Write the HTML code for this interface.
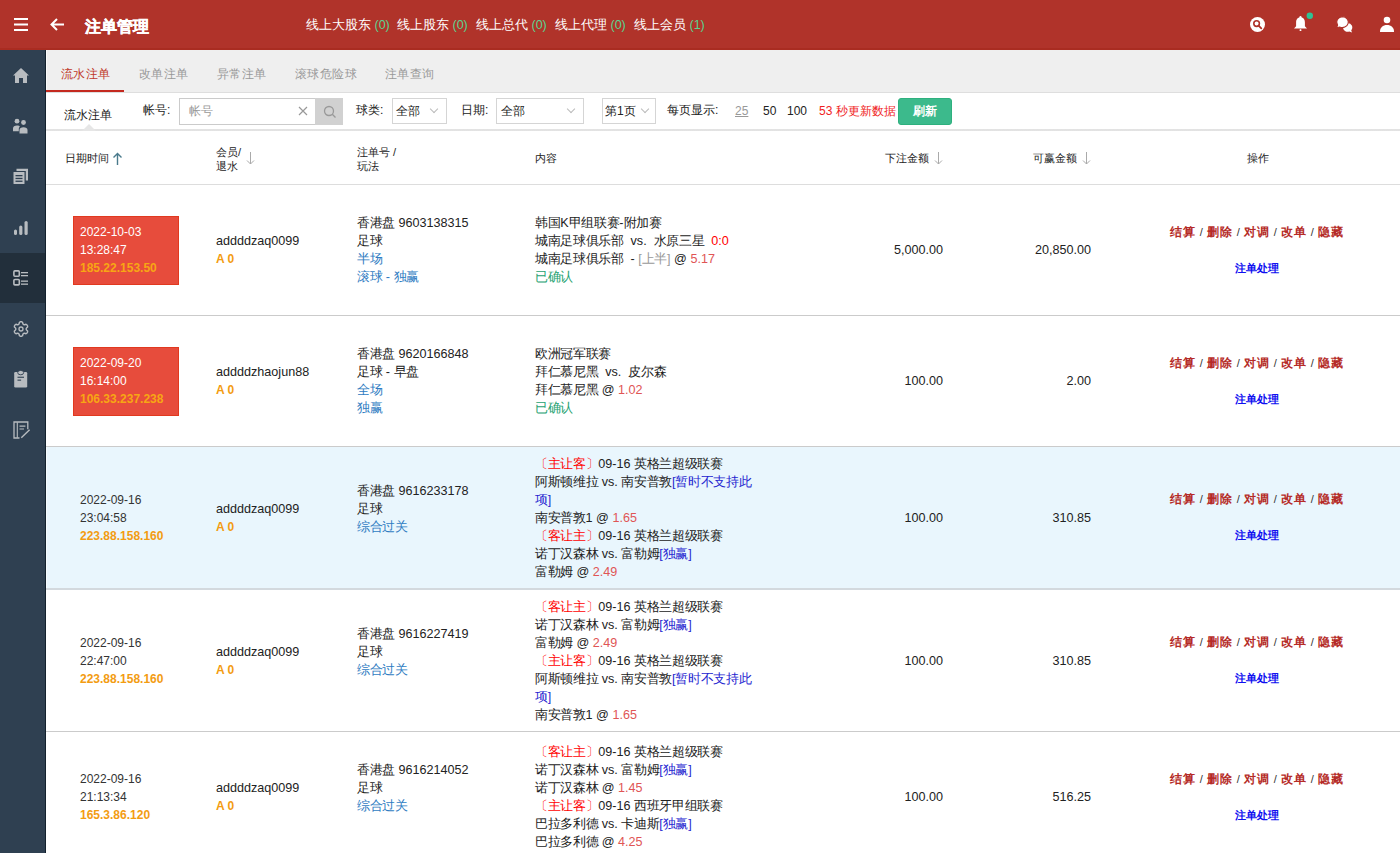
<!DOCTYPE html>
<html><head><meta charset="utf-8">
<style>
*{margin:0;padding:0;box-sizing:border-box}
html,body{width:1400px;height:853px;overflow:hidden;background:#fff;font-family:"Liberation Sans",sans-serif;color:#222;font-size:13px}
.abs{position:absolute}
.nav{position:absolute;top:16px;font-size:12.5px;color:#fff;line-height:18px;white-space:nowrap}
#hdr{position:absolute;left:0;top:0;width:1400px;height:50px;background:#b0332a;border-bottom:2px solid #a92c21}
#side{position:absolute;left:0;top:50px;width:46px;height:803px;background:#2f4051;border-right:1px solid #13212d}
#side .act{position:absolute;left:0;top:203px;width:45px;height:50px;background:#222f3b}
#side svg{position:absolute}
#tabs{position:absolute;left:46px;top:50px;width:1354px;height:43px;background:#efefef;border-bottom:1px solid #dedede}
#tabs span{position:absolute;top:15px;font-size:12px;letter-spacing:.4px;color:#999;line-height:18px;white-space:nowrap}
#tabs .on{color:#c0392b}
#tabs .ul{position:absolute;left:0;top:40px;width:78px;height:2px;background:#c4291f}
#filt{position:absolute;left:46px;top:93px;width:1354px;height:37px;background:#fff}
#shadow{position:absolute;left:46px;top:129px;width:1354px;height:4px;background:linear-gradient(#e6e6e6 0%,#dedede 30%,#efefef 60%,#f8f8f8 100%)}
.ft{position:absolute;font-size:12px;line-height:18px;color:#222;white-space:nowrap}
.bx{position:absolute;border:1px solid #d5d5d5;height:26px;top:98px;background:#fff}
.chev{position:absolute;top:9px;width:6px;height:6px;border-right:1px solid #bbb;border-bottom:1px solid #bbb;transform:rotate(45deg)}
.th{position:absolute;font-size:11px;line-height:14px;color:#222;white-space:nowrap}
.row{position:absolute;left:46px;width:1354px;border-bottom:1px solid #cbcbcb}
.row.blue{background:#e9f6fd;border-bottom:2px solid #d3d9de}
.cell{position:absolute;top:0;bottom:0;display:flex;align-items:center}
.cell>div{line-height:18px;white-space:nowrap;font-size:12.6px}
.cell>.rb{background:#e74c3c;border:1px solid #e1391f;color:#fff;width:106px;padding:6px 6px 7px 6px;font-size:12px}
.rb .ip{color:#f7a614}
.cell>.dtb{padding:7px;font-size:12px;color:#333}
.ip{color:#f39c12;font-weight:bold;font-size:12px}
.ao{color:#f39c12;font-weight:bold;font-size:12px}
.bl{color:#2f7cc2}
.gr{color:#26a271}
.od{color:#e05555}
.rd{color:#f00}
.gy{color:#999}
.pu{color:#2626d0}
.act1{color:#b52b27;font-weight:bold;font-size:12px;letter-spacing:.7px;white-space:nowrap;margin-top:-1px}
.act1 i{font-style:normal;font-weight:normal;color:#333;font-size:11px;padding:0 4.5px 0 4px;letter-spacing:0}
.act2{color:#1010f0;font-weight:bold;font-size:11px;text-align:center;margin-top:18px}
.num{justify-content:flex-end}
.z{letter-spacing:-.35px}
</style></head><body>
<div id="hdr">
  <svg class="abs" style="left:13px;top:17px" width="16" height="15" viewBox="0 0 16 15"><rect x="1" y="1" width="14" height="2" fill="#fff"/><rect x="1" y="6.5" width="14" height="2" fill="#fff"/><rect x="1" y="12" width="14" height="2" fill="#fff"/></svg>
  <svg class="abs" style="left:49px;top:17px" width="16" height="15" viewBox="0 0 16 15"><path d="M15 7.5H2.5M8 2L2.5 7.5L8 13" stroke="#fff" stroke-width="2" fill="none"/></svg>
  <div class="abs" style="left:85px;top:17px;font-size:16px;font-weight:bold;color:#fff;line-height:20px;-webkit-text-stroke:.4px #fff">注单管理</div>
  <div class="nav" style="left:306px">线上大股东 <b style="color:#5ad491;font-weight:normal">(0)</b></div><div class="nav" style="left:397px">线上股东 <b style="color:#5ad491;font-weight:normal">(0)</b></div><div class="nav" style="left:476px">线上总代 <b style="color:#5ad491;font-weight:normal">(0)</b></div><div class="nav" style="left:555px">线上代理 <b style="color:#5ad491;font-weight:normal">(0)</b></div><div class="nav" style="left:634px">线上会员 <b style="color:#5ad491;font-weight:normal">(1)</b></div>
  <!-- search circle -->
  <svg class="abs" style="left:1249px;top:16px" width="17" height="17" viewBox="0 0 17 17"><circle cx="8.5" cy="8.5" r="7.5" fill="#fff"/><circle cx="7.6" cy="7.6" r="2.8" fill="none" stroke="#af3229" stroke-width="1.6"/><path d="M9.6 9.6L12.3 12.3" stroke="#af3229" stroke-width="1.8" stroke-linecap="round"/></svg>
  <!-- bell -->
  <svg class="abs" style="left:1292px;top:11px" width="24" height="22" viewBox="0 0 24 22"><path d="M8.5 6.3C11.2 6.3 12.9 8.5 12.9 11.5V15.3L15 17.6H2L4.1 15.3V11.5C4.1 8.5 5.8 6.3 8.5 6.3Z" fill="#fff"/><circle cx="8.5" cy="6.2" r="1.1" fill="#fff"/><rect x="7.6" y="18.2" width="1.8" height="1.8" rx=".5" fill="#fff"/><circle cx="17.8" cy="4.8" r="3.2" fill="#2fc294"/></svg>
  <!-- chat -->
  <svg class="abs" style="left:1335px;top:16px" width="19" height="17" viewBox="0 0 19 17"><path d="M12.8 7A4.6 4.4 0 0 1 16.2 14.2L17 16.5L14.3 15.5A4.6 4.4 0 1 1 12.8 7Z" fill="#fff"/><path d="M7.5 0.6A6 5.5 0 1 1 4.6 11L1.6 11.8L2.6 9A6 5.5 0 0 1 7.5 0.6Z" fill="#fff" stroke="#af3229" stroke-width="1.1"/></svg>
  <!-- user -->
  <svg class="abs" style="left:1379px;top:16px" width="16" height="17" viewBox="0 0 16 17"><circle cx="8" cy="4" r="3.3" fill="#fff"/><path d="M1 15.5C1 11.5 4 9 8 9S15 11.5 15 15.5V16H1Z" fill="#fff"/></svg>
</div>
<div id="side">
  <div class="act"></div>
  <!-- home -->
  <svg style="left:12px;top:17px" width="18" height="17" viewBox="0 0 18 17"><path d="M9 1L17 8.5H15V16H11V11H7V16H3V8.5H1Z" fill="#b8bcc0"/></svg>
  <!-- users -->
  <svg style="left:12px;top:68px" width="18" height="16" viewBox="0 0 18 16"><circle cx="5" cy="3.2" r="2.4" fill="#b8bcc0"/><circle cx="11.5" cy="4.5" r="2.4" fill="#b8bcc0"/><path d="M1 13.3V10.5C1 8.5 2.5 7.5 5 7.5C6.5 7.5 7.5 8 8 8.6C7 9.3 6.8 10.5 6.8 12V13.3Z" fill="#b8bcc0"/><path d="M7.5 15.5V12C7.5 10 9.2 9.2 11.5 9.2S15.5 10 15.5 12V15.5Z" fill="#b8bcc0"/></svg>
  <!-- docs -->
  <svg style="left:12px;top:118px" width="18" height="17" viewBox="0 0 18 17"><path d="M4.5 0.8H16V12.5H13.8V3H4.5Z" fill="#b8bcc0"/><rect x="1.5" y="4" width="11" height="12" rx="0.5" fill="#b8bcc0"/><rect x="3.5" y="7" width="7" height="1.3" fill="#2f4051"/><rect x="3.5" y="9.8" width="7" height="1.3" fill="#2f4051"/><rect x="3.5" y="12.6" width="7" height="1.3" fill="#2f4051"/></svg>
  <!-- bars -->
  <svg style="left:12px;top:170px" width="18" height="16" viewBox="0 0 18 16"><rect x="2" y="9.5" width="3" height="5.5" rx="1.5" fill="#b8bcc0"/><rect x="7.2" y="5.5" width="3.2" height="9.5" rx="1.6" fill="#b8bcc0"/><rect x="12.5" y="1" width="3.2" height="14" rx="1.6" fill="#b8bcc0"/></svg>
  <!-- list -->
  <svg style="left:12px;top:219px" width="18" height="18" viewBox="0 0 18 18"><rect x="1.9" y="1.9" width="5.4" height="5.4" rx="1" fill="none" stroke="#b8bcc0" stroke-width="1.6"/><rect x="1.9" y="10.5" width="5.4" height="5.4" rx="1" fill="none" stroke="#b8bcc0" stroke-width="1.6"/><rect x="9" y="3" width="7" height="1.3" fill="#b8bcc0"/><rect x="9" y="6" width="7" height="1.3" fill="#b8bcc0"/><rect x="9" y="11.5" width="7" height="1.3" fill="#b8bcc0"/><rect x="9" y="14.5" width="7" height="1.3" fill="#b8bcc0"/></svg>
  <!-- gear -->
  <svg style="left:12px;top:270px" width="18" height="18" viewBox="0 0 18 18"><path d="M7.08 3.74 L7.45 2.28 L8.24 1.79 L9.76 1.79 L10.55 2.28 L10.92 3.74 L11.55 4.58 L12.60 4.71 L14.05 4.29 L14.87 4.74 L15.62 6.05 L15.60 6.98 L14.51 8.03 L14.10 9.00 L14.51 9.97 L15.60 11.02 L15.62 11.95 L14.87 13.26 L14.05 13.71 L12.60 13.29 L11.55 13.42 L10.92 14.26 L10.55 15.72 L9.76 16.21 L8.24 16.21 L7.45 15.72 L7.08 14.26 L6.45 13.42 L5.40 13.29 L3.95 13.71 L3.13 13.26 L2.38 11.95 L2.40 11.02 L3.49 9.97 L3.90 9.00 L3.49 8.03 L2.40 6.98 L2.38 6.05 L3.13 4.74 L3.95 4.29 L5.40 4.71 L6.45 4.58Z" fill="none" stroke="#b8bcc0" stroke-width="1.4" stroke-linejoin="round"/><circle cx="9" cy="9" r="2" fill="none" stroke="#b8bcc0" stroke-width="1.3"/></svg>
  <!-- clipboard -->
  <svg style="left:12px;top:320px" width="18" height="18" viewBox="0 0 18 18"><rect x="2.2" y="2" width="13" height="15.5" rx="1.3" fill="#b8bcc0"/><ellipse cx="8.7" cy="2.6" rx="3" ry="2.2" fill="#b8bcc0" stroke="#2f4051" stroke-width="0.9"/><rect x="5.5" y="6.7" width="6.5" height="1.1" fill="#2f4051"/><rect x="5.5" y="9.6" width="3.6" height="1.1" fill="#2f4051"/></svg>
  <!-- form edit -->
  <svg style="left:12px;top:371px" width="19" height="18" viewBox="0 0 19 18"><path d="M7.5 17H2V1H15.8V8.2" fill="none" stroke="#b8bcc0" stroke-width="1.3"/><path d="M5.3 1.3V16.8" stroke="#b8bcc0" stroke-width="1.1"/><path d="M7.5 5.2H13.4M7.5 8H12" stroke="#b8bcc0" stroke-width="1.2"/><path d="M9.3 16.8L17.6 8.8" stroke="#b8bcc0" stroke-width="1.4"/></svg>
</div>
<div id="tabs">
  <span class="on" style="left:15px">流水注单</span>
  <span style="left:93px">改单注单</span>
  <span style="left:171px">异常注单</span>
  <span style="left:249px">滚球危险球</span>
  <span style="left:339px">注单查询</span>
  <div class="ul"></div>
</div>
<div id="filt"></div>
<div id="shadow"></div>
<svg class="abs" style="left:82px;top:124px" width="14" height="7" viewBox="0 0 14 7"><path d="M0 7L7 0L14 7Z" fill="#e6e6e6"/></svg>
<div class="ft" style="left:64px;top:106px;font-size:12px">流水注单</div>
<div class="ft" style="left:143px;top:101px">帐号:</div>
<div class="bx" style="left:179px;width:137px;height:27px;border-color:#cbcbcb"><span class="ft" style="left:9px;top:3px;color:#999">帐号</span><svg class="abs" style="left:118px;top:7px" width="10" height="10" viewBox="0 0 10 10"><path d="M1 1L9 9M9 1L1 9" stroke="#999" stroke-width="1.2"/></svg></div>
<div class="abs" style="left:315px;top:98px;width:28px;height:27px;background:#d1d1d1"><svg class="abs" style="left:8px;top:7px" width="14" height="14" viewBox="0 0 14 14"><circle cx="6" cy="6" r="4.5" fill="none" stroke="#999" stroke-width="1.3"/><path d="M9.3 9.3L12.5 12.5" stroke="#999" stroke-width="1.3"/></svg></div>
<div class="ft" style="left:356px;top:101px">球类:</div>
<div class="bx" style="left:392px;width:55px"><span class="ft" style="left:3px;top:3px">全部</span><div class="chev" style="left:38px;top:7px"></div></div>
<div class="ft" style="left:461px;top:101px">日期:</div>
<div class="bx" style="left:496px;width:88px"><span class="ft" style="left:4px;top:3px">全部</span><div class="chev" style="left:71px;top:7px"></div></div>
<div class="bx" style="left:602px;width:54px"><span class="ft" style="left:2px;top:3px">第1页</span><div class="chev" style="left:39px;top:7px"></div></div>
<div class="ft" style="left:667px;top:101px">每页显示:</div>
<div class="ft" style="left:735px;top:102px;color:#999;text-decoration:underline">25</div>
<div class="ft" style="left:763px;top:102px">50</div>
<div class="ft" style="left:787px;top:102px">100</div>
<div class="ft" style="left:819px;top:102px;color:#f01e1e">53 秒更新数据</div>
<div class="abs" style="left:898px;top:98px;width:54px;height:27px;background:#3cba8c;border:1px solid #2eb07e;border-radius:3px;color:#fff;font-weight:bold;font-size:12px;line-height:25px;text-align:center">刷新</div>

<!-- table header -->
<div class="abs" style="left:46px;top:131px;width:1354px;height:54px;border-bottom:1px solid #ddd;background:#fff"></div>
<div class="th" style="left:65px;top:151px">日期时间</div>
<svg class="abs" style="left:112px;top:152px" width="11" height="13" viewBox="0 0 11 13"><path d="M5.5 1.5V13M1.5 5.5L5.5 1.5L9.5 5.5" stroke="#4a7a8c" stroke-width="1.4" fill="none"/></svg>
<div class="th" style="left:216px;top:145px">会员/<br>退水</div>
<svg class="abs" style="left:246px;top:152px" width="9" height="13" viewBox="0 0 9 13"><path d="M4.5 0V12M1 8.5L4.5 12L8 8.5" stroke="#aaa" stroke-width="1" fill="none"/></svg>
<div class="th" style="left:357px;top:145px">注单号 /<br>玩法</div>
<div class="th" style="left:535px;top:151px">内容</div>
<div class="th" style="left:885px;top:151px">下注金额</div>
<svg class="abs" style="left:934px;top:152px" width="9" height="13" viewBox="0 0 9 13"><path d="M4.5 0V12M1 8.5L4.5 12L8 8.5" stroke="#aaa" stroke-width="1" fill="none"/></svg>
<div class="th" style="left:1033px;top:151px">可赢金额</div>
<svg class="abs" style="left:1082px;top:152px" width="9" height="13" viewBox="0 0 9 13"><path d="M4.5 0V12M1 8.5L4.5 12L8 8.5" stroke="#aaa" stroke-width="1" fill="none"/></svg>
<div class="th" style="left:1247px;top:151px">操作</div>

<div class="row" style="top:185px;height:131px">
<div class="cell" style="left:27px"><div class="rb"><div>2022-10-03</div><div>13:28:47</div><div class="ip">185.22.153.50</div></div></div>
<div class="cell" style="left:170px"><div><div>addddzaq0099</div><div class="ao">A 0</div></div></div>
<div class="cell" style="left:311px"><div><div><span class="z">香港盘</span> 9603138315</div><div><span class="z">足球</span></div><div><span class="bl"><span class="z">半场</span></span></div><div><span class="bl"><span class="z">滚球</span> - <span class="z">独赢</span></span></div></div></div>
<div class="cell" style="left:489px;width:232px"><div><div><span class="z">韩国</span>K<span class="z">甲组联赛</span>-<span class="z">附加赛</span></div><div><span class="z">城南足球俱乐部</span>&nbsp; vs.&nbsp; <span class="z">水原三星</span>&nbsp; <span class="rd">0:0</span></div><div><span class="z">城南足球俱乐部</span>&nbsp; - <span class="gy">[<span class="z">上半</span>]</span> @ <span class="od">5.17</span></div><div><span class="gr"><span class="z">已确认</span></span></div></div></div>
<div class="cell num" style="right:457px"><div>5,000.00</div></div>
<div class="cell num" style="right:309px"><div>20,850.00</div></div>
<div class="cell" style="left:1111px;width:200px;justify-content:center"><div><div class="act1">结算<i>/</i>删除<i>/</i>对调<i>/</i>改单<i>/</i>隐藏</div><div class="act2">注单处理</div></div></div>
</div>
<div class="row" style="top:316px;height:131px">
<div class="cell" style="left:27px"><div class="rb"><div>2022-09-20</div><div>16:14:00</div><div class="ip">106.33.237.238</div></div></div>
<div class="cell" style="left:170px"><div><div>addddzhaojun88</div><div class="ao">A 0</div></div></div>
<div class="cell" style="left:311px"><div><div><span class="z">香港盘</span> 9620166848</div><div><span class="z">足球</span> - <span class="z">早盘</span></div><div><span class="bl"><span class="z">全场</span></span></div><div><span class="bl"><span class="z">独赢</span></span></div></div></div>
<div class="cell" style="left:489px;width:232px"><div><div><span class="z">欧洲冠军联赛</span></div><div><span class="z">拜仁慕尼黑</span>&nbsp; vs.&nbsp; <span class="z">皮尔森</span></div><div><span class="z">拜仁慕尼黑</span> @ <span class="od">1.02</span></div><div><span class="gr"><span class="z">已确认</span></span></div></div></div>
<div class="cell num" style="right:457px"><div>100.00</div></div>
<div class="cell num" style="right:309px"><div>2.00</div></div>
<div class="cell" style="left:1111px;width:200px;justify-content:center"><div><div class="act1">结算<i>/</i>删除<i>/</i>对调<i>/</i>改单<i>/</i>隐藏</div><div class="act2">注单处理</div></div></div>
</div>
<div class="row blue" style="top:447px;height:143px">
<div class="cell" style="left:27px"><div class="dtb"><div>2022-09-16</div><div>23:04:58</div><div class="ip">223.88.158.160</div></div></div>
<div class="cell" style="left:170px"><div><div>addddzaq0099</div><div class="ao">A 0</div></div></div>
<div class="cell" style="left:311px"><div><div><span class="z">香港盘</span> 9616233178</div><div><span class="z">足球</span></div><div><span class="bl"><span class="z">综合过关</span></span></div><div>&nbsp;</div></div></div>
<div class="cell" style="left:489px;width:232px"><div><div><span class="rd"><span class="z">〔主让客〕</span></span>09-16 <span class="z">英格兰超级联赛</span></div><div><span class="z">阿斯顿维拉</span> vs. <span class="z">南安普敦</span><span class="pu">[<span class="z">暂时不支持此</span></span></div><div><span class="pu"><span class="z">项</span>]</span></div><div><span class="z">南安普敦</span>1 @ <span class="od">1.65</span></div><div><span class="rd"><span class="z">〔客让主〕</span></span>09-16 <span class="z">英格兰超级联赛</span></div><div><span class="z">诺丁汉森林</span> vs. <span class="z">富勒姆</span><span class="pu">[<span class="z">独赢</span>]</span></div><div><span class="z">富勒姆</span> @ <span class="od">2.49</span></div></div></div>
<div class="cell num" style="right:457px"><div>100.00</div></div>
<div class="cell num" style="right:309px"><div>310.85</div></div>
<div class="cell" style="left:1111px;width:200px;justify-content:center"><div><div class="act1">结算<i>/</i>删除<i>/</i>对调<i>/</i>改单<i>/</i>隐藏</div><div class="act2">注单处理</div></div></div>
</div>
<div class="row" style="top:590px;height:142px">
<div class="cell" style="left:27px"><div class="dtb"><div>2022-09-16</div><div>22:47:00</div><div class="ip">223.88.158.160</div></div></div>
<div class="cell" style="left:170px"><div><div>addddzaq0099</div><div class="ao">A 0</div></div></div>
<div class="cell" style="left:311px"><div><div><span class="z">香港盘</span> 9616227419</div><div><span class="z">足球</span></div><div><span class="bl"><span class="z">综合过关</span></span></div><div>&nbsp;</div></div></div>
<div class="cell" style="left:489px;width:232px"><div><div><span class="rd"><span class="z">〔客让主〕</span></span>09-16 <span class="z">英格兰超级联赛</span></div><div><span class="z">诺丁汉森林</span> vs. <span class="z">富勒姆</span><span class="pu">[<span class="z">独赢</span>]</span></div><div><span class="z">富勒姆</span> @ <span class="od">2.49</span></div><div><span class="rd"><span class="z">〔主让客〕</span></span>09-16 <span class="z">英格兰超级联赛</span></div><div><span class="z">阿斯顿维拉</span> vs. <span class="z">南安普敦</span><span class="pu">[<span class="z">暂时不支持此</span></span></div><div><span class="pu"><span class="z">项</span>]</span></div><div><span class="z">南安普敦</span>1 @ <span class="od">1.65</span></div></div></div>
<div class="cell num" style="right:457px"><div>100.00</div></div>
<div class="cell num" style="right:309px"><div>310.85</div></div>
<div class="cell" style="left:1111px;width:200px;justify-content:center"><div><div class="act1">结算<i>/</i>删除<i>/</i>对调<i>/</i>改单<i>/</i>隐藏</div><div class="act2">注单处理</div></div></div>
</div>
<div class="row" style="top:732px;height:131px">
<div class="cell" style="left:27px"><div class="dtb"><div>2022-09-16</div><div>21:13:34</div><div class="ip">165.3.86.120</div></div></div>
<div class="cell" style="left:170px"><div><div>addddzaq0099</div><div class="ao">A 0</div></div></div>
<div class="cell" style="left:311px"><div><div><span class="z">香港盘</span> 9616214052</div><div><span class="z">足球</span></div><div><span class="bl"><span class="z">综合过关</span></span></div><div>&nbsp;</div></div></div>
<div class="cell" style="left:489px;width:232px"><div><div><span class="rd"><span class="z">〔客让主〕</span></span>09-16 <span class="z">英格兰超级联赛</span></div><div><span class="z">诺丁汉森林</span> vs. <span class="z">富勒姆</span><span class="pu">[<span class="z">独赢</span>]</span></div><div><span class="z">诺丁汉森林</span> @ <span class="od">1.45</span></div><div><span class="rd"><span class="z">〔主让客〕</span></span>09-16 <span class="z">西班牙甲组联赛</span></div><div><span class="z">巴拉多利德</span> vs. <span class="z">卡迪斯</span><span class="pu">[<span class="z">独赢</span>]</span></div><div><span class="z">巴拉多利德</span> @ <span class="od">4.25</span></div></div></div>
<div class="cell num" style="right:457px"><div>100.00</div></div>
<div class="cell num" style="right:309px"><div>516.25</div></div>
<div class="cell" style="left:1111px;width:200px;justify-content:center"><div><div class="act1">结算<i>/</i>删除<i>/</i>对调<i>/</i>改单<i>/</i>隐藏</div><div class="act2">注单处理</div></div></div>
</div>
<div class="abs" style="left:46px;top:50px;width:1px;height:40px;background:rgba(255,255,255,.75)"></div>
<div class="abs" style="left:46px;top:447px;width:1px;height:141px;background:rgba(255,255,255,.6)"></div>
</body></html>
